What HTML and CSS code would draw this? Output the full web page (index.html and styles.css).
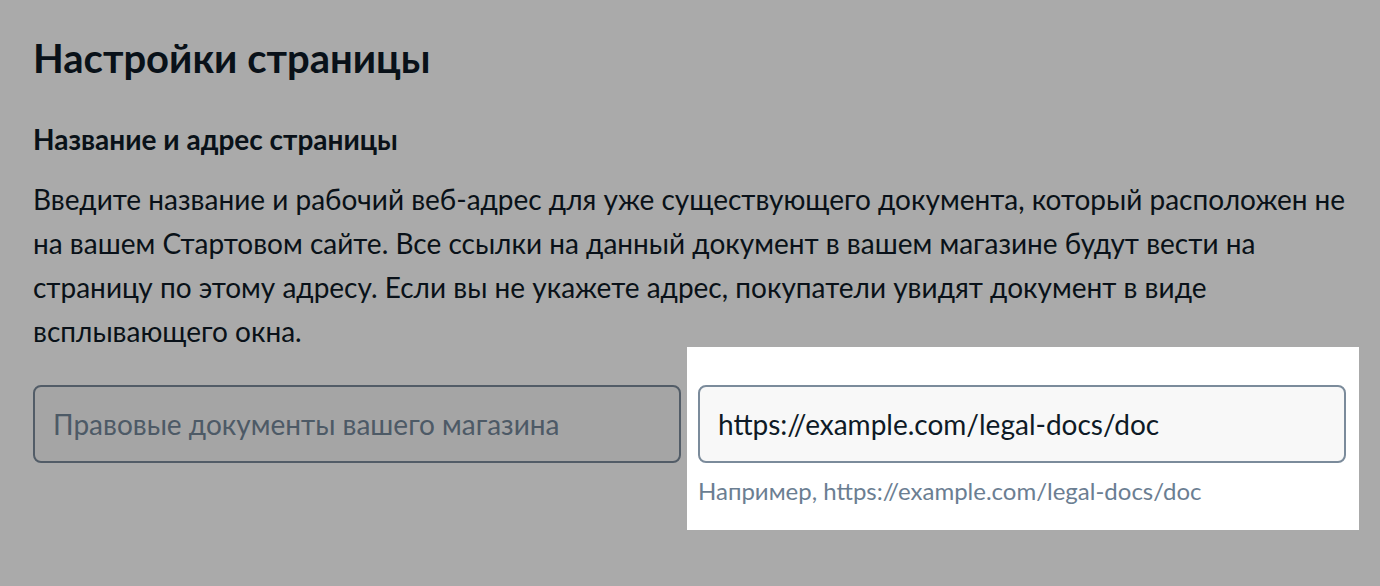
FILE: index.html
```html
<!DOCTYPE html>
<html lang="ru">

<head>
    <meta charset="UTF-8">
    <meta name="viewport" content="width=device-width, initial-scale=1.0">
    <title>Настройки страницы</title>
    <link rel="stylesheet" href="styles.css">
</head>

<body>
    <div class="page">
        <h1 class="page-title">Настройки страницы</h1>
        <h2 class="section-title">Название и адрес страницы</h2>
        <p class="section-text">Введите название и рабочий веб-адрес для уже существующего документа, который расположен не на вашем Стартовом сайте. Все ссылки на данный документ в вашем магазине будут вести на страницу по этому адресу. Если вы не укажете адрес, покупатели увидят документ в виде всплывающего окна.</p>

        <div class="fields">
            <div class="field">
                <input class="field-input" type="text" placeholder="Правовые документы вашего магазина">
            </div>
            <!-- подсвеченное поле, остальное затемнено -->
            <div class="field spotlight">
                <input class="field-input" type="text" value="https://example.com/legal-docs/doc">
                <div class="field-hint">Например, https://example.com/legal-docs/doc</div>
            </div>
        </div>
    </div>
</body>

</html>
```

FILE: styles.css
```css
:root {
    --text-color: #0e1a26;
    --muted-color: #6b7e92;
    --border-color: #7b8b9b;
    --input-bg: #f8f8f8;
}

html,
body {
    margin: 0;
    min-height: 100%;
}

body {
    min-height: 100vh;
    background-color: #ffffff;
    font-family: Lato, 'Noto Sans', sans-serif;
    color: var(--text-color);
}

.page {
    width: 1316px;
    padding: 34px 0 0 33px;
}

.page-title {
    margin: 0;
    font-size: 40px;
    font-weight: 700;
    line-height: 48px;
}

.section-title {
    margin: 39px 0 0;
    font-size: 28px;
    font-weight: 700;
    line-height: 36px;
}

.section-text {
    margin: 20px 0 0;
    font-size: 28px;
    line-height: 44px;
}

.fields {
    display: grid;
    grid-template-columns: 648px 648px;
    gap: 17px;
    margin-top: 32px;
    align-items: start;
}

.field-input {
    box-sizing: border-box;
    width: 100%;
    height: 78px;
    padding: 0 18px;
    border: 2px solid var(--border-color);
    border-radius: 8px;
    background-color: var(--input-bg);
    font-family: inherit;
    font-size: 28px;
    color: var(--text-color);
    outline: none;
}

.field-input::placeholder {
    color: #74879a;
}

.field-hint {
    margin-top: 13px;
    font-size: 24px;
    line-height: 30px;
    color: var(--muted-color);
}

/* белая подложка вокруг поля, остальная страница под тёмной вуалью */
.spotlight {
    position: relative;
    z-index: 1;
    margin: -38px -13px 0 -11px;
    padding: 38px 13px 24px 11px;
    background-color: #ffffff;
    box-shadow: 0 0 0 3000px rgba(0, 0, 0, 0.333);
}
```
